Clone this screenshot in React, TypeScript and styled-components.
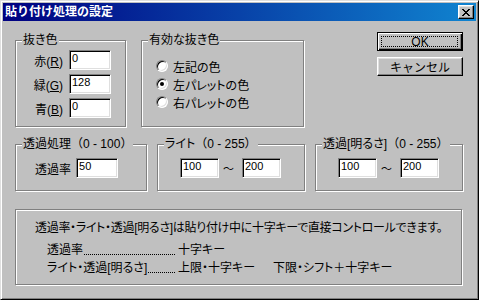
import React from 'react';
import styled, { createGlobalStyle } from 'styled-components';

const GlobalStyle = createGlobalStyle`
  html, body {
    margin: 0;
    padding: 0;
    background: #c0c0c0;
  }
  body {
    font-family: "Liberation Sans", "Noto Sans CJK JP", sans-serif;
    font-size: 12px;
    color: #000;
    font-feature-settings: "palt";
  }
`;

// window chrome

const Window = styled.div`
  width: 479px;
  height: 300px;
  box-sizing: border-box;
  background: #c0c0c0;
  border: 1px solid;
  border-color: #dfdfdf #000 #000 #dfdfdf;
  box-shadow: inset 1px 1px 0 #fff, inset -1px -1px 0 #808080;
  padding: 2px;
  display: flex;
  flex-direction: column;
`;

const TitleBar = styled.div`
  height: 18px;
  flex-shrink: 0;
  display: flex;
  align-items: center;
  justify-content: space-between;
  padding: 0 2px;
  background: linear-gradient(to right, #000080, #1084d0);
`;

const TitleText = styled.span`
  color: #fff;
  font-weight: bold;
  font-size: 12px;
  line-height: 18px;
  font-feature-settings: normal;
`;

const CloseButton = styled.div`
  width: 16px;
  height: 14px;
  box-sizing: border-box;
  background: #c0c0c0;
  border: 1px solid;
  border-color: #fff #000 #000 #fff;
  box-shadow: inset -1px -1px 0 #808080, inset 1px 1px 0 #dfdfdf;
  display: flex;
  align-items: center;
  justify-content: center;
`;

const Body = styled.div`
  padding: 11px 0 0 12px;
  display: flex;
  flex-direction: column;
`;

const Row = styled.div<{ $top?: number }>`
  display: flex;
  align-items: flex-start;
  margin-top: ${(p) => p.$top ?? 0}px;
`;

// etched group box

const Group = styled.div<{ $w: number; $h: number; $left?: number; $top?: number }>`
  position: relative;
  box-sizing: border-box;
  width: ${(p) => p.$w}px;
  height: ${(p) => p.$h}px;
  margin-left: ${(p) => p.$left ?? 0}px;
  margin-top: ${(p) => p.$top ?? 0}px;
  border: 1px solid #808080;
  box-shadow: inset 1px 1px 0 #fff, 1px 1px 0 #fff;
`;

const Legend = styled.span`
  position: absolute;
  top: -8px;
  left: 6px;
  padding: 0 1px;
  background: #c0c0c0;
  line-height: 15px;
  white-space: nowrap;
`;

// full-width brackets keep their width, as in the original font
const Paren = styled.span`
  font-feature-settings: normal;
`;

// fields

const ColorFields = styled.div`
  display: flex;
  flex-direction: column;
  align-items: flex-end;
  gap: 4px;
  padding: 9px 14px 0 0;
`;

const Field = styled.div<{ $gap?: number }>`
  display: flex;
  align-items: center;
  gap: ${(p) => p.$gap ?? 6}px;
`;

const Label = styled.span`
  white-space: nowrap;
`;

const TextBox = styled.input<{ $w?: number }>`
  width: ${(p) => p.$w ?? 42}px;
  height: 20px;
  box-sizing: border-box;
  margin: 0;
  padding: 0 2px 4px 2px;
  border: 1px solid;
  border-color: #808080 #fff #fff #808080;
  box-shadow: inset 1px 1px 0 #000, inset -1px -1px 0 #dfdfdf;
  background: #fff;
  font-family: "Liberation Sans", sans-serif;
  font-size: 11px;
  color: #000;
  outline: none;
`;

const RadioList = styled.div`
  display: flex;
  flex-direction: column;
  padding: 16px 0 0 14px;
`;

const RadioRow = styled.label`
  display: flex;
  align-items: center;
  gap: 5px;
  height: 18px;
`;

const RadioDot = styled.span<{ $checked?: boolean }>`
  width: 12px;
  height: 12px;
  box-sizing: border-box;
  border-radius: 50%;
  border: 1px solid;
  border-color: #808080 #fff #fff #808080;
  box-shadow: inset 1px 1px 0 #000, inset -1px -1px 0 #dfdfdf;
  background: #fff;
  display: flex;
  align-items: center;
  justify-content: center;

  &::after {
    content: '';
    width: 4px;
    height: 4px;
    border-radius: 50%;
    background: ${(p) => (p.$checked ? '#000' : 'transparent')};
  }
`;

const ButtonColumn = styled.div`
  display: flex;
  flex-direction: column;
  gap: 6px;
  margin-left: 73px;
`;

const Button = styled.button<{ $default?: boolean }>`
  position: relative;
  width: 86px;
  height: 19px;
  box-sizing: border-box;
  margin: 0;
  padding: 0;
  background: #c0c0c0;
  font-family: "Liberation Sans", "Noto Sans CJK JP", sans-serif;
  font-size: 12px;
  color: #000;
  border: 1px solid;
  border-color: ${(p) => (p.$default ? '#000' : '#fff #000 #000 #fff')};
  box-shadow: ${(p) =>
    p.$default
      ? 'inset 1px 1px 0 #fff, inset -1px -1px 0 #000, inset -2px -2px 0 #808080'
      : 'inset -1px -1px 0 #808080, inset 1px 1px 0 #dfdfdf'};

  &::after {
    content: '';
    display: ${(p) => (p.$default ? 'block' : 'none')};
    position: absolute;
    inset: 3px 4px 3px 3px;
    border: 1px dotted #000;
  }
`;

const RangeFields = styled.div`
  display: flex;
  align-items: center;
  padding: 13px 0 0 22px;
`;

const Tilde = styled.span`
  width: 23px;
  padding-right: 4px;
  box-sizing: border-box;
  text-align: center;
  font-size: 11px;
`;

const SingleField = styled.div`
  padding: 13px 0 0 19px;
`;

// help text

const Help = styled.div`
  padding: 9px 0 0 19px;
  display: flex;
  flex-direction: column;
`;

const HelpLine = styled.div`
  height: 18px;
  line-height: 18px;
  white-space: nowrap;
  letter-spacing: -0.3px;
`;

const KeyRow = styled.div<{ $top?: number }>`
  display: grid;
  grid-template-columns: 131px 95px auto;
  height: 18px;
  line-height: 18px;
  padding-left: 12px;
  margin-top: ${(p) => p.$top ?? 0}px;
  white-space: nowrap;
`;

const KeyValue = styled.span<{ $span?: boolean }>`
  grid-column: ${(p) => (p.$span ? '2 / 4' : 'auto')};
`;

const Leader = styled.div`
  display: flex;
  align-items: flex-end;
`;

const Dots = styled.span`
  flex: 1;
  height: 1px;
  margin: 0 2px 4px 1px;
  background-image: repeating-linear-gradient(to right, #000 0 1px, transparent 1px 2px);
`;

const CloseGlyph = () => {
  const px = [
    [0, 0], [1, 0], [6, 0], [7, 0],
    [1, 1], [2, 1], [5, 1], [6, 1],
    [2, 2], [3, 2], [4, 2], [5, 2],
    [3, 3], [4, 3],
    [2, 4], [3, 4], [4, 4], [5, 4],
    [1, 5], [2, 5], [5, 5], [6, 5],
    [0, 6], [1, 6], [6, 6], [7, 6],
  ];
  return (
    <svg width="8" height="7" viewBox="0 0 8 7" shapeRendering="crispEdges">
      {px.map(([x, y]) => (
        <rect key={`${x}-${y}`} x={x} y={y} width="1" height="1" fill="#000" />
      ))}
    </svg>
  );
};

const colorRows = [
  { name: '赤', key: 'R', value: '0' },
  { name: '緑', key: 'G', value: '128' },
  { name: '青', key: 'B', value: '0' },
];

const radios = [
  { label: '左記の色', checked: false },
  { label: '左パレットの色', checked: true },
  { label: '右パレットの色', checked: false },
];

const ranges = [
  { title: 'ライト', left: 10 },
  { title: '透過[明るさ]', left: 10 },
];

const App: React.FC = () => {
  return (
    <>
      <GlobalStyle />
      <Window>
        <TitleBar>
          <TitleText>貼り付け処理の設定</TitleText>
          <CloseButton>
            <CloseGlyph />
          </CloseButton>
        </TitleBar>

        <Body>
          <Row>
            <Group $w={111} $h={87} $top={8}>
              <Legend>抜き色</Legend>
              <ColorFields>
                {colorRows.map((r) => (
                  <Field key={r.key}>
                    <Label>
                      {r.name}(<u>{r.key}</u>)
                    </Label>
                    <TextBox defaultValue={r.value} />
                  </Field>
                ))}
              </ColorFields>
            </Group>

            <Group $w={163} $h={87} $left={15} $top={8}>
              <Legend>有効な抜き色</Legend>
              <RadioList>
                {radios.map((r) => (
                  <RadioRow key={r.label}>
                    <RadioDot $checked={r.checked} />
                    <span>{r.label}</span>
                  </RadioRow>
                ))}
              </RadioList>
            </Group>

            <ButtonColumn>
              <Button $default>OK</Button>
              <Button>キャンセル</Button>
            </ButtonColumn>
          </Row>

          <Row $top={17}>
            <Group $w={132} $h={47}>
              <Legend>
                透過処理<Paren>（</Paren>0 - 100<Paren>）</Paren>
              </Legend>
              <SingleField>
                <Field $gap={5}>
                  <Label>透過率</Label>
                  <TextBox defaultValue="50" />
                </Field>
              </SingleField>
            </Group>

            {ranges.map((g) => (
              <Group key={g.title} $w={148} $h={47} $left={g.left}>
                <Legend>
                  {g.title}
                  <Paren>（</Paren>0 - 255<Paren>）</Paren>
                </Legend>
                <RangeFields>
                  <TextBox $w={39} defaultValue="100" />
                  <Tilde>〜</Tilde>
                  <TextBox $w={39} defaultValue="200" />
                </RangeFields>
              </Group>
            ))}
          </Row>

          <Row $top={18}>
            <Group $w={447} $h={76}>
              <Help>
                <HelpLine>透過率・ライト・透過[明るさ]は貼り付け中に十字キーで直接コントロールできます。</HelpLine>
                <KeyRow $top={4}>
                  <Leader>
                    <span>透過率</span>
                    <Dots />
                  </Leader>
                  <KeyValue $span>十字キー</KeyValue>
                </KeyRow>
                <KeyRow>
                  <Leader>
                    <span>ライト・透過[明るさ]</span>
                    <Dots />
                  </Leader>
                  <KeyValue>上限・十字キー</KeyValue>
                  <KeyValue>下限・シフト＋十字キー</KeyValue>
                </KeyRow>
              </Help>
            </Group>
          </Row>
        </Body>
      </Window>
    </>
  );
};

export default App;
